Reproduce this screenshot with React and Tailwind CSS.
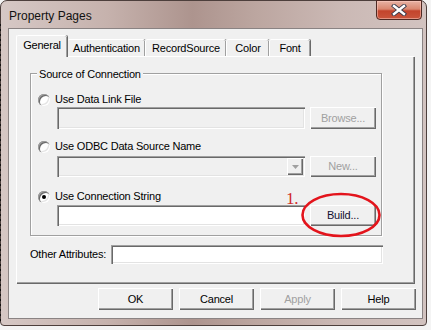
import React from "react";

const raised =
  "shadow-[inset_1px_1px_0_#ffffff,inset_-1px_-1px_0_#696969,inset_-2px_-2px_0_#a0a0a0]";
const sunken =
  "shadow-[inset_1px_1px_0_#a0a0a0,inset_2px_2px_0_#696969,inset_-1px_-1px_0_#ffffff,inset_-2px_-2px_0_#e3e3e3]";

function Radio({ checked }) {
  return (
    <div className="relative w-[12px] h-[12px] rounded-full bg-white shadow-[inset_1px_1px_0_#a0a0a0,inset_2px_2px_0_#696969,inset_-1px_-1px_0_#ffffff,inset_-2px_-2px_0_#e3e3e3] flex items-center justify-center shrink-0">
      {checked && <div className="w-[4px] h-[4px] rounded-full bg-black" />}
    </div>
  );
}

function Button({ children, disabled, w = "w-[66px]", h = "h-[22px]" }) {
  return (
    <div
      className={`${w} ${h} ${raised} bg-[#f0f0f0] flex items-center justify-center shrink-0 ${
        disabled ? "text-[#a0a0a0]" : "text-black"
      }`}
    >
      {children}
    </div>
  );
}

function Tab({ label, w, selected }) {
  return (
    <div
      className={`${w} ${
        selected ? "h-[22px] pb-[3px] z-10 -mb-[1px]" : "h-[17px] pt-[1px]"
      } bg-[#f0f0f0] border-l border-t border-white shadow-[inset_-1px_0_0_#a0a0a0,1px_0_0_#696969] rounded-t-[2px] flex items-center justify-center`}
    >
      {label}
    </div>
  );
}

export default function App() {
  return (
    <div className="relative w-[431px] h-[330px] bg-[#f4f4f4] font-['Liberation_Sans',Arial,sans-serif] text-[11px] tracking-[-0.2px] text-black overflow-hidden">
      <div className="absolute left-0 top-[24px] w-[1px] h-[300px] bg-[repeating-linear-gradient(to_bottom,#111_0px,#111_2px,transparent_2px,transparent_5px)]" />
      <div className="w-[427px] h-[326px] rounded-t-[7px] rounded-b-[4px] border border-[#4d3f3c] bg-[linear-gradient(90deg,#d6c8c5_0%,#c6b2ad_25%,#ad948e_45%,#bca6a0_60%,#cbb9b5_80%,#d2c3c0_100%)] flex flex-col">
        {/* title bar */}
        <div className="h-[27px] flex justify-between items-start">
          <div className="pl-[8px] pt-[6px] text-[12px] tracking-normal text-[#111]">
            Property Pages
          </div>
          <div className="mr-[4px] -mt-[1px] w-[46px] h-[20px] rounded-b-[4px] border border-[#4e2a24] bg-[linear-gradient(180deg,#e7b2a4_0%,#d98770_45%,#c3442c_55%,#c9553c_100%)] shadow-[inset_0_0_0_1px_rgba(255,210,200,0.5)] flex items-center justify-center">
            <svg width="16" height="12" viewBox="0 0 16 12">
              <path d="M3 2 L13 10 M13 2 L3 10" stroke="#3a3a4a" strokeWidth="4.2" strokeLinecap="square" />
              <path d="M3 2 L13 10 M13 2 L3 10" stroke="#ffffff" strokeWidth="2.4" strokeLinecap="square" />
            </svg>
          </div>
        </div>
        {/* client */}
        <div className="ml-[7px] w-[415px] h-[291px] border border-[#8a8383] bg-[#f0f0f0] flex flex-col">
          <div className="pl-[7px] pt-[6px] flex items-end">
            <Tab label="General" w="w-[51px]" selected />
            <Tab label="Authentication" w="w-[78px]" />
            <Tab label="RecordSource" w="w-[81px]" />
            <Tab label="Color" w="w-[43px]" />
            <Tab label="Font" w="w-[41px]" />
          </div>
          {/* panel */}
          <div className="ml-[7px] w-[398px] h-[227px] bg-[#f0f0f0] border-l border-t border-white shadow-[inset_-1px_-1px_0_#a0a0a0,1px_1px_0_#696969] pl-[13px] pt-[16px] flex flex-col">
            {/* group */}
            <div className="relative w-[352px] h-[163px] border border-[#a0a0a0] shadow-[inset_1px_1px_0_#ffffff,1px_1px_0_#ffffff] pl-[7px] pt-[19px] flex flex-col">
              <div className="absolute left-[6px] -top-[7px] px-[2px] bg-[#f0f0f0] leading-[14px]">
                Source of Connection
              </div>
              <div className="h-[13px] flex items-center gap-[5px]">
                <Radio />
                <span>Use Data Link File</span>
              </div>
              <div className="mt-[1px] ml-[19px] flex gap-[5px]">
                <div className={`w-[248px] h-[22px] bg-[#f0f0f0] ${sunken}`} />
                <Button disabled>Browse...</Button>
              </div>
              <div className="mt-[11px] h-[13px] flex items-center gap-[5px]">
                <Radio />
                <span>Use ODBC Data Source Name</span>
              </div>
              <div className="mt-[3px] ml-[19px] flex gap-[5px]">
                <div className={`w-[248px] h-[21px] bg-[#f0f0f0] ${sunken} flex justify-end items-center pr-[2px]`}>
                  <div className={`w-[16px] h-[17px] bg-[#f0f0f0] ${raised} flex items-center justify-center`}>
                    <svg width="7" height="4" viewBox="0 0 7 4">
                      <path d="M0 0 H7 L3.5 4 Z" fill="#a0a0a0" />
                    </svg>
                  </div>
                </div>
                <Button disabled h="h-[21px]">New...</Button>
              </div>
              <div className="mt-[13px] h-[13px] flex items-center gap-[5px]">
                <Radio checked />
                <span>Use Connection String</span>
              </div>
              <div className="mt-[2px] ml-[19px] flex gap-[5px]">
                <div className={`w-[248px] h-[21px] bg-white ${sunken}`} />
                <Button h="h-[21px]">
                  <span className="text-[#101030]">Build...</span>
                </Button>
              </div>
            </div>
            <div className="mt-[9px] flex items-center">
              <span className="w-[81px]">Other Attributes:</span>
              <div className={`w-[272px] h-[19px] bg-white ${sunken}`} />
            </div>
          </div>
          {/* buttons */}
          <div className="mt-[5px] pr-[6px] flex justify-end gap-[6px]">
            <Button w="w-[75px]">OK</Button>
            <Button w="w-[75px]">Cancel</Button>
            <Button w="w-[75px]" disabled>Apply</Button>
            <Button w="w-[75px]">Help</Button>
          </div>
        </div>
      </div>
      {/* annotation overlay */}
      <svg className="absolute left-0 top-0 pointer-events-none" width="431" height="330">
        <ellipse cx="341" cy="215" rx="38.5" ry="21" fill="none" stroke="#e3141c" strokeWidth="2.6" />
        <text x="286" y="204" fontFamily="'Liberation Serif', serif" fontSize="17" fill="#d02828">
          1.
        </text>
      </svg>
    </div>
  );
}
